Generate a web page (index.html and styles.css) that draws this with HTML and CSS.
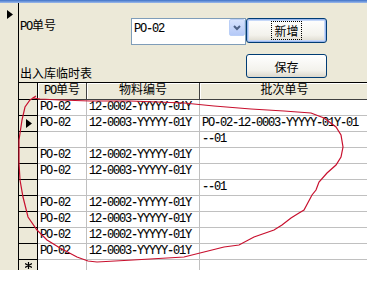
FILE: index.html
```html
<!DOCTYPE html>
<html lang="en">
<head>
    <meta charset="UTF-8">
    <title>出入库临时表</title>
    <link rel="stylesheet" href="styles.css">
</head>
<body>
    <div class="window">
        <div class="titlebar"></div>
        <div class="body">
            <!-- Form record selector -->
            <div class="selector">
                <svg class="arrow" width="6" height="9" viewBox="0 0 6 9"><polygon points="0,0 6,4.5 0,9" fill="#000"/></svg>
            </div>

            <div class="form">
                <div class="top">
                    <div class="labels">
                        <div class="label"><span class="lat">PO</span>单号</div>
                        <div class="label">出入库临时表</div>
                    </div>
                    <div class="combo">
                        <span class="combo-text">PO-02</span>
                        <span class="combo-btn">
                            <svg width="8" height="6" viewBox="0 0 8 6"><polyline points="1,1 4,4 7,1" fill="none" stroke="#4d6185" stroke-width="2"/></svg>
                        </span>
                    </div>
                    <div class="buttons">
                        <button class="btn default"><span class="focus">新增</span></button>
                        <button class="btn">保存</button>
                    </div>
                </div>

                <!-- Datasheet -->
                <div class="grid">
                    <div class="sel"></div>
                    <div class="head"><span class="lat">PO</span>单号</div>
                    <div class="head">物料编号</div>
                    <div class="head">批次单号</div>

                    <div class="sel"></div>
                    <div class="cell">PO-02</div>
                    <div class="cell">12-0002-YYYYY-01Y</div>
                    <div class="cell"></div>

                    <div class="sel"><svg width="6" height="9" viewBox="0 0 6 9"><polygon points="0,0 6,4.5 0,9" fill="#000"/></svg></div>
                    <div class="cell">PO-02</div>
                    <div class="cell">12-0003-YYYYY-01Y</div>
                    <div class="cell">PO-02-12-0003-YYYYY-01Y-01</div>

                    <div class="sel"></div>
                    <div class="cell"></div>
                    <div class="cell"></div>
                    <div class="cell">--01</div>

                    <div class="sel"></div>
                    <div class="cell">PO-02</div>
                    <div class="cell">12-0002-YYYYY-01Y</div>
                    <div class="cell"></div>

                    <div class="sel"></div>
                    <div class="cell">PO-02</div>
                    <div class="cell">12-0003-YYYYY-01Y</div>
                    <div class="cell"></div>

                    <div class="sel"></div>
                    <div class="cell"></div>
                    <div class="cell"></div>
                    <div class="cell">--01</div>

                    <div class="sel"></div>
                    <div class="cell">PO-02</div>
                    <div class="cell">12-0002-YYYYY-01Y</div>
                    <div class="cell"></div>

                    <div class="sel"></div>
                    <div class="cell">PO-02</div>
                    <div class="cell">12-0003-YYYYY-01Y</div>
                    <div class="cell"></div>

                    <div class="sel"></div>
                    <div class="cell">PO-02</div>
                    <div class="cell">12-0002-YYYYY-01Y</div>
                    <div class="cell"></div>

                    <div class="sel"></div>
                    <div class="cell">PO-02</div>
                    <div class="cell">12-0003-YYYYY-01Y</div>
                    <div class="cell"></div>

                    <!-- new record row -->
                    <div class="sel star">
                        <svg width="7" height="7" viewBox="0 0 7 7"><path d="M3.5,0 V7 M0,1.5 L7,5.5 M0,5.5 L7,1.5" stroke="#000" stroke-width="1.2"/></svg>
                    </div>
                    <div class="cell last"></div>
                    <div class="cell last"></div>
                    <div class="cell last"></div>
                </div>
            </div>
        </div>

        <!-- Hand-drawn red mark over the grid -->
        <svg class="mark" width="367" height="270" viewBox="0 0 367 270">
            <path d="M36,96 L33,98 L40,99 L60,100 L90,101 L130,101 L184,103 L214,106 L251,109 L284,111 L311,113 L324,118 L336,127 L341,135 L343,147 L341,157 L336,165 L327,173 L319,182 L316,190 L312,195 L304,210 L299,213 L291,218 L282,225 L274,230 L254,237 L239,245 L224,247 L204,252 L184,257 L133,260 L97,262 L88,261 L77,257 L60,248 L47,240 L37,230 L28,217 L23,197 L20,180 L19,163 L19,140 L22,120 L25,107 L30,100 L33,98" fill="none" stroke="#c8102e" stroke-width="1.2"/>
        </svg>
    </div>
</body>
</html>
```

FILE: styles.css
```css
/* Page */
body {
    margin: 0;
    background-color: #fff;
    font-family: "Liberation Mono", "Noto Sans CJK SC", monospace;
    font-size: 12px;
    color: #000;
}

.lat {
    font-size: 12px;
    letter-spacing: -1.2px;
    -webkit-text-stroke: 0.1px #000;
}

/* Access form window */
.window {
    position: relative;
    width: 367px;
    height: 270px;
    overflow: hidden;
    background-color: #ece9d8;
}

.titlebar {
    height: 3px;
    background: linear-gradient(#3f72c8, #9dbbec);
}

.body {
    display: flex;
    height: 267px;
}

.selector {
    width: 18px;
    border-right: 1px solid #000;
    flex-shrink: 0;
}

.selector .arrow {
    display: block;
    margin: 7px 0 0 7px;
}

.form {
    flex: 1;
    min-width: 0;
}

/* Header area with combo and buttons */
.top {
    display: flex;
    height: 64px;
    padding-top: 15px;
}

.labels {
    display: flex;
    flex-direction: column;
    justify-content: space-between;
    width: 111px;
    margin-left: 1px;
}

.label {
    line-height: 14px;
}

.labels .label:first-child {
    padding-top: 2px;
}

.combo {
    display: flex;
    align-items: flex-start;
    width: 115px;
    height: 27px;
    box-sizing: border-box;
    border: 1px solid #7f9db9;
    background-color: #fff;
}

.combo-text {
    flex: 1;
    padding: 3px 0 0 2px;
    line-height: 14px;
    letter-spacing: -1.2px;
    -webkit-text-stroke: 0.1px #000;
}

.combo-btn {
    display: flex;
    align-items: center;
    justify-content: center;
    width: 16px;
    height: 17px;
    box-sizing: border-box;
    border: 1px solid #bacff7;
    border-radius: 2px;
    background: linear-gradient(#d7e3fd, #b5c9f7);
}

.buttons {
    display: flex;
    flex-direction: column;
    gap: 11px;
}

.btn {
    width: 81px;
    height: 24px;
    padding: 0;
    border: 1px solid #003c74;
    border-radius: 3px;
    background: linear-gradient(#ffffff, #f3f2ec 70%, #dcd8cc);
    font-family: "Noto Sans CJK SC", sans-serif;
    font-size: 12px;
    color: #000;
}

.btn.default {
    height: 25px;
    box-shadow: inset 0 0 0 1px #9bb7ec, inset 0 0 0 2px #c6d8f8;
}

.btn .focus {
    outline: 1px dotted #000;
    padding: 0 2px;
}

/* Datasheet */
.grid {
    display: grid;
    grid-template-columns: 19px 49px 113px 170px;
    grid-template-rows: 17px repeat(10, 16px) 10px;
    border-top: 1px solid #000;
    line-height: 15px;
}

.grid > div {
    box-sizing: border-box;
    white-space: nowrap;
    overflow: hidden;
}

.sel {
    background-color: #ece9d8;
    border-right: 1px solid #000;
    border-bottom: 1px solid #000;
    padding-left: 7px;
}

.sel svg {
    display: block;
    margin-top: 3px;
}

.sel.star {
    padding-left: 6px;
    border-bottom: none;
}

.sel.star svg {
    margin-top: 2px;
}

.head {
    background-color: #ece9d8;
    border-right: 1px solid #404040;
    border-bottom: 1px solid #404040;
    box-shadow: inset 1px 1px #fff;
    text-align: center;
    line-height: 16px;
}

.cell {
    background-color: #fff;
    border-right: 1px solid #c0c0c0;
    border-bottom: 1px solid #c0c0c0;
    padding-left: 2px;
    letter-spacing: -1.2px;
    -webkit-text-stroke: 0.1px #000;
}

.cell.last {
    border-bottom: none;
}

.mark {
    position: absolute;
    top: 0;
    left: 0;
    pointer-events: none;
}
```
